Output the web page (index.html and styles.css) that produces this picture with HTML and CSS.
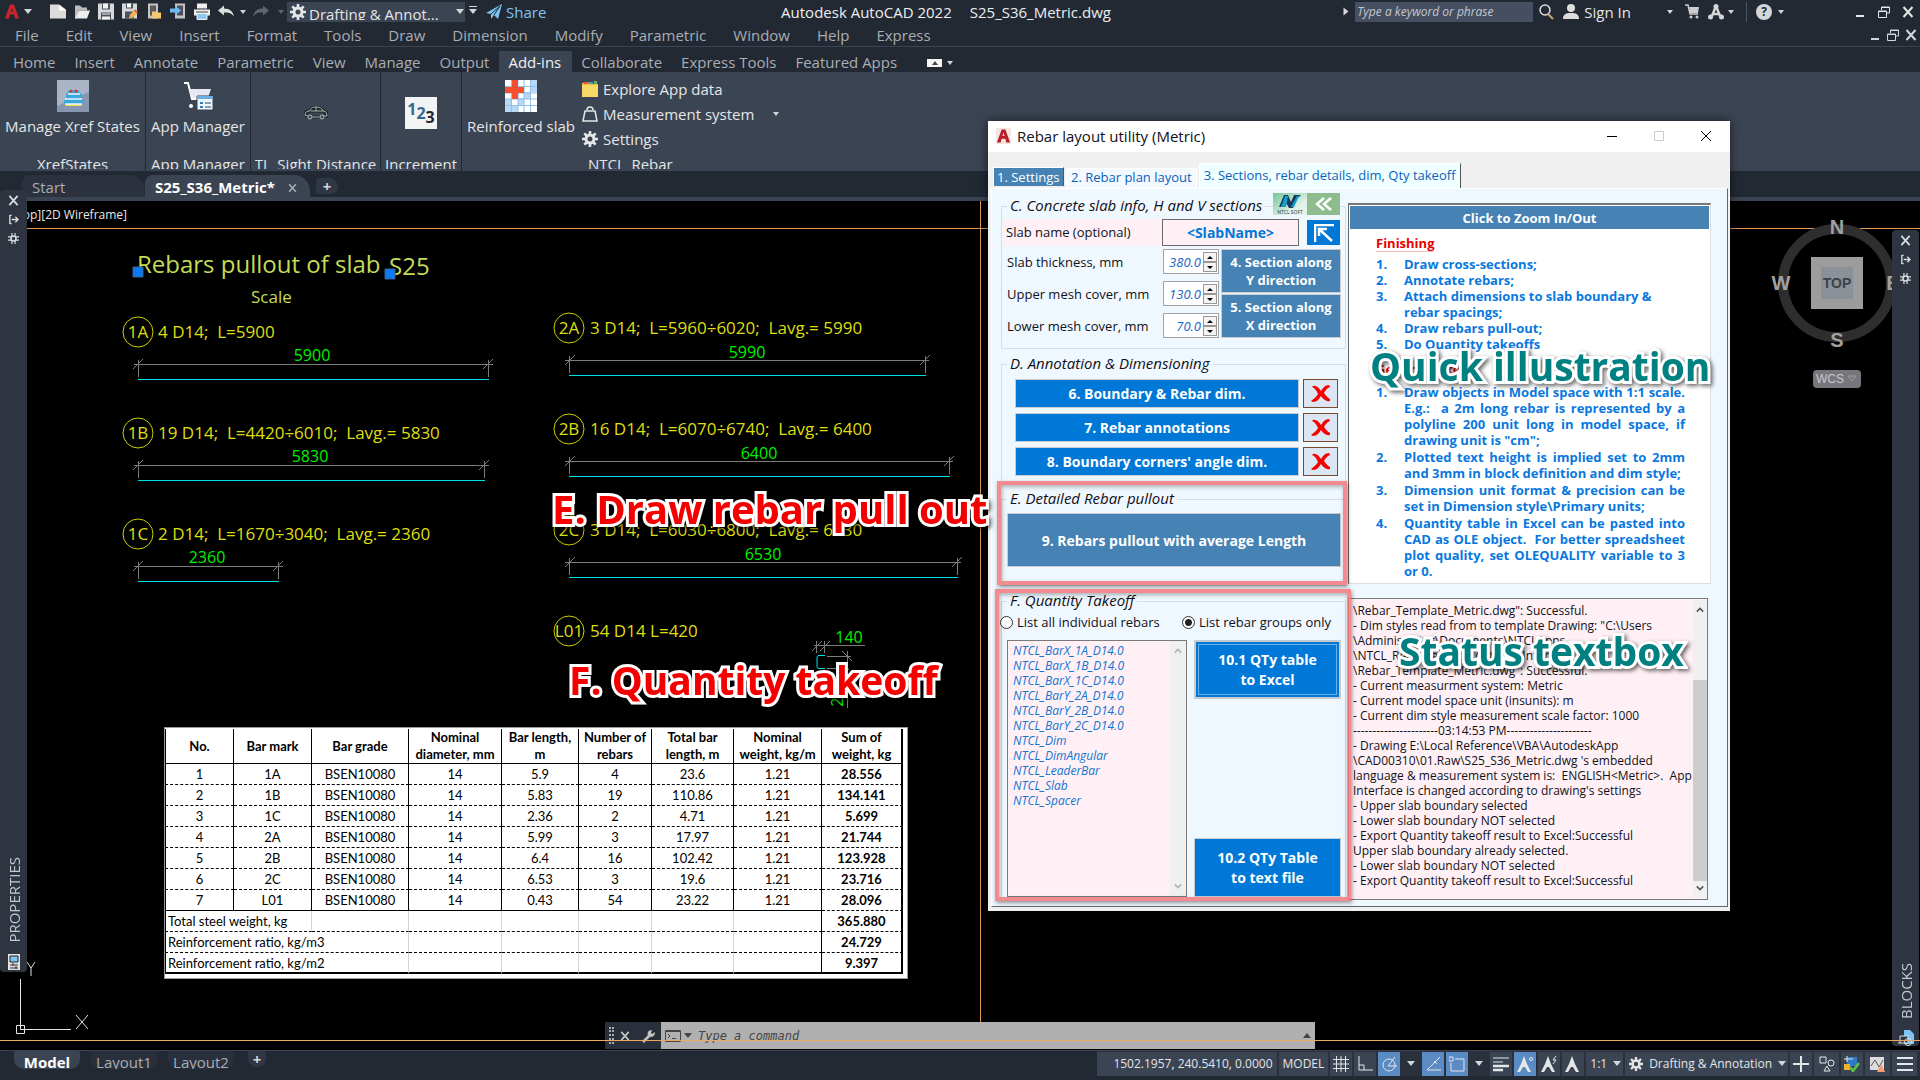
FILE: index.html
```html
<!DOCTYPE html>
<html lang="en">
<head>
    <meta charset="UTF-8">
    <meta name="viewport" content="width=device-width, initial-scale=1.0">
    <title>Autodesk AutoCAD 2022 - S25_S36_Metric.dwg</title>
    <link rel="stylesheet" href="styles.css">
</head>
<body>

    <!-- Shared icons -->
    <svg class="defs" width="0" height="0" aria-hidden="true">
        <symbol id="gear" viewBox="0 0 16 16">
            <circle cx="8" cy="8" r="4" fill="none" stroke="currentColor" stroke-width="3"/>
            <path d="M8 0v3M8 13v3M0 8h3M13 8h3M2.300 2.300l2.200 2.200M11.500 11.500l2.200 2.200M2.300 13.700l2.200-2.200M11.500 4.500l2.200-2.200" stroke="currentColor" stroke-width="2.600"/>
        </symbol>
        <symbol id="close" viewBox="0 0 12 12">
            <path d="M1.500 1l9 10M10.500 1l-9 10" stroke="currentColor" stroke-width="2" fill="none"/>
        </symbol>
        <symbol id="restore" viewBox="0 0 12 12">
            <path d="M3.500 4V1h8v6H9M3 1.500h8" stroke="currentColor" fill="none"/>
            <path d="M.5 5h8v6.500h-8zM.5 5.500h8" stroke="currentColor" fill="none"/>
        </symbol>
        <symbol id="minimize" viewBox="0 0 12 12">
            <path d="M2 10h8" stroke="currentColor" stroke-width="2"/>
        </symbol>
        <symbol id="autohide" viewBox="0 0 12 12">
            <path d="M2 1v10M2 1.500h2M2 10.500h2M4 6h7M8 3l3 3-3 3" stroke="currentColor" stroke-width="1.500" fill="none"/>
        </symbol>
        <symbol id="burst" viewBox="0 0 14 14">
            <circle cx="7" cy="7" r="3.200" fill="none" stroke="currentColor" stroke-width="2"/>
            <path d="M5 0v4M9 0v4M5 10v4M9 10v4M0 5h4M0 9h4M10 5h4M10 9h4" stroke="currentColor" stroke-width="1.500"/>
        </symbol>
        <symbol id="logo" viewBox="0 0 16 16">
            <path d="M1 15L6 1h4l5 14h-4l-1-4H6l-1 4zM7 8h2L8 4z" fill="currentColor" fill-rule="evenodd"/>
        </symbol>
        <symbol id="scale" viewBox="0 0 16 16">
            <path d="M7 0l3 8 4 8h-3l-3-5H6l-3 5H0l4-8z" fill="currentColor"/>
        </symbol>
        <symbol id="redx" viewBox="0 0 20 20">
            <path d="M2 2c3-1 6 2 8 5 2-3 4-6 8-6l1 2c-3 1-5 4-6 6 2 3 4 5 6 6v2c-4 1-7-2-9-5-2 3-4 6-8 6l-2-1c3-2 6-5 7-7C5 6 4 4 1 3z" fill="#f60000"/>
        </symbol>
        <symbol id="up" viewBox="0 0 10 6"><path d="M1 5l4-4 4 4" fill="none" stroke="currentColor" stroke-width="2"/></symbol>
        <symbol id="down" viewBox="0 0 10 6"><path d="M1 1l4 4 4-4" fill="none" stroke="currentColor" stroke-width="2"/></symbol>
    </svg>

    <header class="titlebar">
        <div class="quick">
            <button class="tool app" aria-label="Application menu"><svg width="16" height="18"><use href="#logo"/></svg></button>
            <i class="caret"></i>
            <div class="tools">
                <button class="tool" aria-label="New"><svg viewBox="0 0 16 16"><path d="M0 1h9l7 5v9H0z" fill="#dcdcdc"/><path d="M9 1l7 6H9z" fill="#fff"/></svg></button>
                <button class="tool" aria-label="Open"><svg viewBox="0 0 16 16"><path d="M1 15V2h5l2 2h5v3H5l-3 8z" fill="#bbb"/><path d="M5 7h11l-3 8H1z" fill="#eee"/></svg></button>
                <button class="tool" aria-label="Save"><svg viewBox="0 0 16 16"><path d="M0 0h16v16H0z" fill="#d8d8d8"/><path d="M4 0h8v6H4zM3 9h10v7H3z" fill="#4a5260"/><path d="M5 0h5v5H5zM4 10h8v1H4zM4 13h8v3H4z" fill="#f2f2f2"/></svg></button>
                <button class="tool" aria-label="Save As"><svg viewBox="0 0 16 16"><path d="M0 0h15v15H0z" fill="#d8d8d8"/><path d="M4 0h7v5H4zM3 8h9v7H3z" fill="#4a5260"/><path d="M5 0h4v4H5z" fill="#fff"/><path d="M7 15l1-4 5-5 3 3-5 5z" fill="#f0b45a"/><path d="M13 6l3 3-1 1-3-3z" fill="#e0483c"/></svg></button>
                <button class="tool" aria-label="Open from mobile"><svg viewBox="0 0 16 16"><path d="M2 0h10v15H2z" fill="#c4c4c4"/><path d="M4 2h6v10H4z" fill="#5a5a5a"/><path d="M6 15V8h4l1 1h4v6z" fill="#f7c873"/></svg></button>
                <button class="tool" aria-label="Save to mobile"><svg viewBox="0 0 16 16"><path d="M5 0h10v15H5z" fill="#c4c4c4"/><path d="M7 2h6v10H7z" fill="#4a4f58"/><path d="M0 5h5V2l6 5-6 5V9H0z" fill="#6cbcf0"/></svg></button>
                <button class="tool" aria-label="Plot"><svg viewBox="0 0 16 16"><path d="M3 0h10v5H3zM0 6h16v6H0z" fill="#f0f0f0"/><path d="M2 8h12v1H2z" fill="#444"/><path d="M3 10h10v6H3z" fill="#8ccaf5" stroke="#eee"/></svg></button>
            </div>
            <button class="tool" aria-label="Undo"><svg viewBox="0 0 16 16"><path d="M0 7l6-5v3c6 0 9 3 10 8-3-4-6-4-10-4v3z" fill="#ddd"/></svg></button>
            <i class="caret small"></i>
            <button class="tool redo" aria-label="Redo"><svg viewBox="0 0 16 16"><path d="M16 7l-6-5v3C4 5 1 8 0 13c3-4 6-4 10-4v3z" fill="#5d6571"/></svg></button>
            <i class="caret small dim"></i>
            <button class="workspace"><svg width="16" height="16"><use href="#gear"/></svg><span>Drafting &amp; Annot...</span><i class="caret"></i></button>
            <i class="caret lined"></i>
            <button class="share"><svg width="16" height="16" viewBox="0 0 16 16"><path d="M0 9L16 0l-4 15-4-4-3 4v-5z" fill="#7cc4f4"/><path d="M5 10l9-8-6 9" fill="none" stroke="#222933"/></svg>Share</button>
        </div>
        <h1 class="title"><span>Autodesk AutoCAD 2022</span><span>S25_S36_Metric.dwg</span></h1>
        <div class="account">
            <i class="caret side"></i>
            <input class="search" type="text" placeholder="Type a keyword or phrase" aria-label="Search">
            <svg width="15" height="16" viewBox="0 0 15 16"><circle cx="6" cy="6" r="5" fill="none" stroke="#ddd" stroke-width="1.500"/><path d="M9 10l5 5" stroke="#c9a878" stroke-width="2"/></svg>
            <button class="signin"><svg width="16" height="16" viewBox="0 0 16 16"><circle cx="8" cy="4" r="4" fill="#ddd"/><path d="M0 15c0-5 3-6 8-6s8 1 8 6z" fill="#ddd"/></svg>Sign In</button>
            <i class="caret small"></i>
            <svg width="15" height="15" viewBox="0 0 15 15"><path d="M0 1h3l2 9h8" fill="none" stroke="#ccc" stroke-width="1.500"/><path d="M4 3h10l-1 6H5z" fill="#ccc"/><circle cx="6" cy="13" r="1.500" fill="#ccc"/><circle cx="12" cy="13" r="1.500" fill="#ccc"/></svg>
            <svg width="16" height="16" class="light" viewBox="0 0 16 16"><path d="M8 2l4 10M8 2L4 12M4 10h8" fill="none" stroke="#d4d6d9" stroke-width="2.500"/><circle cx="8" cy="2.500" r="2.500" fill="#d4d6d9"/><circle cx="2.500" cy="13" r="2.500" fill="#d4d6d9"/><circle cx="13.500" cy="13" r="2.500" fill="#d4d6d9"/></svg>
            <i class="caret small"></i>
            <span class="sep"></span>
            <button class="help" aria-label="Help">?</button>
            <i class="caret small"></i>
            <div class="winbtns">
                <button class="tool" aria-label="Minimize"><svg><use href="#minimize"/></svg></button>
                <button class="tool" aria-label="Restore"><svg><use href="#restore"/></svg></button>
                <button class="tool" aria-label="Close"><svg><use href="#close"/></svg></button>
            </div>
        </div>
    </header>

    <nav class="menubar">
        <a href="#">File</a><a href="#">Edit</a><a href="#">View</a><a href="#">Insert</a><a href="#">Format</a><a href="#">Tools</a><a href="#">Draw</a><a href="#">Dimension</a><a href="#">Modify</a><a href="#">Parametric</a><a href="#">Window</a><a href="#">Help</a><a href="#">Express</a>
        <div class="winbtns doc">
            <button class="tool" aria-label="Minimize drawing"><svg><use href="#minimize"/></svg></button>
            <button class="tool" aria-label="Restore drawing"><svg><use href="#restore"/></svg></button>
            <button class="tool" aria-label="Close drawing"><svg><use href="#close"/></svg></button>
        </div>
    </nav>

    <nav class="ribbon-tabs">
        <a href="#">Home</a><a href="#">Insert</a><a href="#">Annotate</a><a href="#">Parametric</a><a href="#">View</a><a href="#">Manage</a><a href="#">Output</a><a href="#" class="active">Add-ins</a><a href="#">Collaborate</a><a href="#">Express Tools</a><a href="#">Featured Apps</a>
        <button class="collapse" aria-label="Minimize ribbon"><i class="caret flip"></i></button>
        <i class="caret small"></i>
    </nav>

    <section class="ribbon">
        <div class="panel xref">
            <button class="big">
                <svg width="32" height="32" viewBox="0 0 32 32"><path d="M0 0h32v32H0z" fill="#8797b2"/><path d="M0 0h32v12L0 26z" fill="#a9b4c6"/><path d="M8 26l4-5h8l5 5z" fill="#ecd94e"/><path d="M7 21l4-4h11l4 4v3H7zM9 15l3-5h9l4 5v3H9z" fill="#3aa7dd"/><path d="M11 14h12M8 19h17M8 24h17" stroke="#eaf6ff" stroke-width="1.500"/><circle cx="14" cy="11" r="1.500" fill="#d33"/><circle cx="19" cy="11" r="1.500" fill="#d33"/></svg>
                <span>Manage Xref States</span>
            </button>
            <h2>XrefStates</h2>
        </div>
        <div class="panel apps">
            <button class="big">
                <svg width="32" height="32" viewBox="0 0 32 32"><path d="M2 3h4l4 16h10" fill="none" stroke="#fff" stroke-width="2"/><path d="M7 9h22l-3 9H10z" fill="#e8e8f0"/><circle cx="9" cy="26" r="2" fill="#fff"/><path d="M15 16h16v14H15z" fill="#eef6ff" stroke="#39424f"/><path d="M15 16h16v3H15z" fill="#6aaede"/><path d="M18 22h3v2h-3zM18 26h3v2h-3z" fill="#2b7cc4"/><path d="M23 23h6M23 27h6" stroke="#345"/></svg>
                <span>App Manager</span>
            </button>
            <h2>App Manager</h2>
        </div>
        <div class="panel sight">
            <button class="big solo" aria-label="TL Sight Distance">
                <svg width="24" height="14" viewBox="0 0 24 14"><path d="M1 9c0-3 2-4 5-4 1-3 2-4 6-4s6 1 7 4c3 0 4 2 4 5h-3M1 9l3 1M8 11h7M7 5h12M12 1v4" fill="none" stroke="#1b2026" stroke-width="3"/><path d="M1 9c0-3 2-4 5-4 1-3 2-4 6-4s6 1 7 4c3 0 4 2 4 5h-3M1 9l3 1M8 11h7M7 5h12M12 1v4" fill="none" stroke="#a9bcb4"/><circle cx="6" cy="11" r="2" fill="none" stroke="#a9bcb4"/><circle cx="18" cy="11" r="2" fill="none" stroke="#a9bcb4"/></svg>
            </button>
            <h2>TL_Sight Distance</h2>
        </div>
        <div class="panel incr">
            <button class="big solo" aria-label="Increment"><span class="numbers"><b>1</b><b>2</b><b>3</b></span></button>
            <h2>Increment</h2>
        </div>
        <div class="panel rebar">
            <button class="big">
                <svg width="32" height="32" viewBox="0 0 32 32"><path d="M0 0h32v32H0z" fill="#fff"/><path d="M0 19h7v13H0zM6 25h7v7H6zM13 18h6v7h-6zM19 12h7v7h-7zM25 0h7v12h-7z" fill="#b7d9f5"/><path d="M6.500 0v32M13 0v32M19 0v32M25.500 0v32M0 6.500h32M0 13h32M0 19h32M0 25.500h32" stroke="#8fc0ea"/><path d="M7 0h6v7h6v6h-6v6H7v-6H0V7h7z" fill="#f4502f"/></svg>
                <span>Reinforced slab</span>
            </button>
            <div class="rows">
                <button><svg width="16" height="16" viewBox="0 0 16 16"><path d="M0 2l6-1 2 2h8v13H0z" fill="#f0b93c"/><path d="M0 4h16v12H0z" fill="#f9d965"/><path d="M2 1h4v2H2z" fill="#e8573f"/><path d="M7 1h4v2H7z" fill="#4a98e0"/><path d="M12 0h3v3h-3z" fill="#5cb85c"/></svg>Explore App data</button>
                <button><svg width="16" height="16" viewBox="0 0 16 16"><path d="M3 5h10l2 10H1zM5 4c0-4 6-4 6 0" fill="none" stroke="#e6e6e6" stroke-width="1.500"/></svg>Measurement system<i class="caret small"></i></button>
                <button><svg width="16" height="16"><use href="#gear"/></svg>Settings</button>
                <h2>NTCL_Rebar</h2>
            </div>
        </div>
    </section>

    <nav class="doc-tabs">
        <a href="#" class="start">Start</a>
        <a href="#" class="current">S25_S36_Metric*<svg width="9" height="10"><use href="#close"/></svg></a>
        <button aria-label="New tab">+</button>
    </nav>

    <main class="canvas">
        <svg class="drawing" width="100%" height="100%">
            <path class="frame" d="M0 27.500h4000M980.500 0v839"/>

            <g class="heading">
                <text x="137" y="72" class="t24">Rebars pullout of slab</text>
                <text x="389" y="74" class="t24">S25</text>
                <text x="251" y="102" class="t17">Scale</text>
                <path class="grip" d="M133 66h10v10h-10zM385 68h10v10h-10z"/>
            </g>

            <g class="mark">
                <circle cx="138" cy="131" r="15"/><text x="138" y="137" class="mid">1A</text>
                <circle cx="138" cy="232" r="15"/><text x="138" y="238" class="mid">1B</text>
                <circle cx="138" cy="333" r="15"/><text x="138" y="339" class="mid">1C</text>
                <circle cx="569" cy="127" r="15"/><text x="569" y="133" class="mid">2A</text>
                <circle cx="569" cy="228" r="15"/><text x="569" y="234" class="mid">2B</text>
                <circle cx="569" cy="329" r="15"/><text x="569" y="335" class="mid">2C</text>
                <circle cx="569" cy="430" r="15"/><text x="569" y="436" class="mid">L01</text>
                <text x="158" y="137">4 D14;  L=5900</text>
                <text x="158" y="238">19 D14;  L=4420÷6010;  Lavg.= 5830</text>
                <text x="158" y="339">2 D14;  L=1670÷3040;  Lavg.= 2360</text>
                <text x="590" y="133">3 D14;  L=5960÷6020;  Lavg.= 5990</text>
                <text x="590" y="234">16 D14;  L=6070÷6740;  Lavg.= 6400</text>
                <text x="590" y="335">3 D14;  L=6030÷6800;  Lavg.= 6530</text>
                <text x="590" y="436">54 D14 L=420</text>
            </g>

            <g class="dim-line">
                <path d="M134 163.500h359M138.500 159v17M488.500 159v17M133 168l10-10M483 168l10-10"/>
                <path d="M134 264.500h355M138.500 260v17M484.500 260v17M133 269l10-10M479 269l10-10"/>
                <path d="M134 365.500h149M138.500 361v17M278.500 361v17M133 370l10-10M273 370l10-10"/>
                <path d="M565 159.500h364M569.500 155v17M925.500 155v17M565 164l10-10M920 164l10-10"/>
                <path d="M565 260.500h388M569.500 256v17M949.500 256v17M565 265l10-10M944 265l10-10"/>
                <path d="M565 361.500h396M569.500 357v17M957.500 357v17M565 366l10-10M952 366l10-10"/>
                <path d="M814 444.500h51M816.500 440v12M824.500 440v12M812 450l10-10M820 450l10-10M827 455.500h24M827 467.500h22M847.500 450v57M842 450l10 10M842 462l10 10"/>
            </g>

            <path class="bar" d="M138 178.500h351M138 279.500h347M138 380.500h141M569 174.500h357M569 275.500h381M569 376.500h389M825 454.500h-6q-2 0-2 2v9q0 2 2 2h6"/>

            <g class="dim-text">
                <text x="312" y="160">5900</text>
                <text x="310" y="261">5830</text>
                <text x="207" y="362">2360</text>
                <text x="747" y="157">5990</text>
                <text x="759" y="258">6400</text>
                <text x="763" y="359">6530</text>
                <text x="849" y="442">140</text>
                <text transform="translate(843 492) rotate(-90)">210</text>
            </g>

            <g class="ucs">
                <path d="M20.500 778v50.500H71M16.500 824.500h8v8h-8zM76 814l12 14M88 814l-12 14M27 761l4 6 4-6M31 767v8"/>
            </g>
        </svg>

        <p class="viewlabel">[–][<span>Top][2D Wireframe]</span></p>

        <table class="takeoff">
            <colgroup><col class="c1"><col class="c2"><col class="c3"><col class="c4"><col class="c5"><col class="c6"><col class="c7"><col class="c8"><col class="c9"></colgroup>
            <thead>
                <tr><th>No.</th><th>Bar mark</th><th>Bar grade</th><th>Nominal diameter, mm</th><th>Bar length, m</th><th>Number of rebars</th><th>Total bar length, m</th><th>Nominal weight, kg/m</th><th>Sum of weight, kg</th></tr>
            </thead>
            <tbody>
                <tr><td>1</td><td>1A</td><td>BSEN10080</td><td>14</td><td>5.9</td><td>4</td><td>23.6</td><td>1.21</td><td>28.556</td></tr>
                <tr><td>2</td><td>1B</td><td>BSEN10080</td><td>14</td><td>5.83</td><td>19</td><td>110.86</td><td>1.21</td><td>134.141</td></tr>
                <tr><td>3</td><td>1C</td><td>BSEN10080</td><td>14</td><td>2.36</td><td>2</td><td>4.71</td><td>1.21</td><td>5.699</td></tr>
                <tr><td>4</td><td>2A</td><td>BSEN10080</td><td>14</td><td>5.99</td><td>3</td><td>17.97</td><td>1.21</td><td>21.744</td></tr>
                <tr><td>5</td><td>2B</td><td>BSEN10080</td><td>14</td><td>6.4</td><td>16</td><td>102.42</td><td>1.21</td><td>123.928</td></tr>
                <tr><td>6</td><td>2C</td><td>BSEN10080</td><td>14</td><td>6.53</td><td>3</td><td>19.6</td><td>1.21</td><td>23.716</td></tr>
                <tr><td>7</td><td>L01</td><td>BSEN10080</td><td>14</td><td>0.43</td><td>54</td><td>23.22</td><td>1.21</td><td>28.096</td></tr>
            </tbody>
            <tfoot>
                <tr><th colspan="2">Total steel weight, kg</th><td></td><td></td><td></td><td></td><td></td><td></td><td>365.880</td></tr>
                <tr><th colspan="3">Reinforcement ratio, kg/m3</th><td></td><td></td><td></td><td></td><td></td><td>24.729</td></tr>
                <tr><th colspan="3">Reinforcement ratio, kg/m2</th><td></td><td></td><td></td><td></td><td></td><td>9.397</td></tr>
            </tfoot>
        </table>

        <svg class="viewcube" width="120" height="180" viewBox="0 0 120 180">
            <circle cx="60" cy="72" r="54" fill="none" stroke="#2e2e2e" stroke-width="10"/>
            <path d="M34 46h52v52H34z" fill="#9c9c9c"/>
            <path d="M44 56h32v32H44z" fill="#8b9198"/>
            <text x="60" y="77" class="top">TOP</text>
            <text x="60" y="23">N</text><text x="60" y="136">S</text><text x="4" y="79">W</text><text x="116" y="79">E</text>
            <rect x="36" y="159" width="48" height="18" rx="4" fill="#76767c"/>
            <text x="53" y="172" class="wcs">WCS</text>
            <path d="M71 165h8l-4 5z" fill="none" stroke="#9c9ca4"/>
        </svg>

        <aside class="palette left">
            <button class="tool" aria-label="Close palette"><svg width="11" height="11"><use href="#close"/></svg></button>
            <button class="tool" aria-label="Auto-hide"><svg width="11" height="11"><use href="#autohide"/></svg></button>
            <button class="tool" aria-label="Properties menu"><svg width="11" height="11"><use href="#burst"/></svg></button>
            <span>PROPERTIES</span>
            <svg width="12" height="16" viewBox="0 0 12 16"><path d="M0 0h12v16H0z" fill="#e2e2e2"/><path d="M2 2h8v6H2z" fill="#7cc4f4" stroke="#222"/><path d="M2 11h8M2 14h8M5 9v3M8 12v3" stroke="#333"/></svg>
        </aside>

        <aside class="palette right">
            <button class="tool" aria-label="Close palette"><svg width="11" height="11"><use href="#close"/></svg></button>
            <button class="tool" aria-label="Auto-hide"><svg width="11" height="11"><use href="#autohide"/></svg></button>
            <button class="tool" aria-label="Blocks menu"><svg width="11" height="11"><use href="#burst"/></svg></button>
            <span>BLOCKS</span>
            <svg width="16" height="16" viewBox="0 0 16 16"><path d="M6 0h6l4 4v10H6z" fill="#7cc4f4"/><path d="M2 6h8v7H2zM2 13H0" fill="#2e3440" stroke="#ddd"/><circle cx="10" cy="12" r="3.500" fill="none" stroke="#ddd"/></svg>
        </aside>

        <div class="command">
            <i class="handle"></i>
            <button class="tool" aria-label="Close command line"><svg width="10" height="10"><use href="#close"/></svg></button>
            <button class="tool" aria-label="Customize"><svg width="14" height="14" viewBox="0 0 14 14"><path d="M1 13l6-6" stroke="#c4c4c4" stroke-width="2.500"/><path d="M10 1c-4 0-5 3-4 6l2 1c3 0 5-1 5-5l-3 2-1-1z" fill="#c4c4c4"/></svg></button>
            <label class="prompt">
                <svg width="16" height="12" viewBox="0 0 16 12"><path d="M.5.5h15v11H.5zM0 1.500h16" fill="none" stroke="#444"/><path d="M3 4l2 2-2 2M7 8.500h4" fill="none" stroke="#444"/></svg>
                <i class="caret dark"></i>
                <input type="text" placeholder="Type a command" aria-label="Command">
                <i class="caret dark flip"></i>
            </label>
        </div>

        <section class="dialog" aria-label="Rebar layout utility">
            <header>
                <svg width="15" height="16"><use href="#logo"/></svg>
                <h2>Rebar layout utility (Metric)</h2>
                <button aria-label="Minimize"><svg width="12" height="12" viewBox="0 0 12 12"><path d="M1 6.500h10" stroke="#000"/></svg></button>
                <button aria-label="Maximize" disabled><svg width="12" height="12" viewBox="0 0 12 12"><path d="M1.500 1.500h9v9h-9z" fill="none" stroke="#ccc"/></svg></button>
                <button aria-label="Close"><svg width="12" height="12" viewBox="0 0 12 12"><path d="M1 1l10 10M11 1L1 11" stroke="#000"/></svg></button>
            </header>
            <nav class="tabs">
                <a href="#" class="first">1. Settings</a>
                <a href="#">2. Rebar plan layout</a>
                <a href="#" class="active">3. Sections, rebar details, dim, Qty takeoff</a>
            </nav>
            <div class="page">
                <div class="col">
                    <fieldset class="slab">
                        <legend>C. Concrete slab info, H and V sections</legend>
                        <div class="corner">
                            <svg width="34" height="22" viewBox="0 0 34 22"><defs><linearGradient id="mint" x2="1" y2="1"><stop offset="0" stop-color="#72c596"/><stop offset=".7" stop-color="#e4f3ea"/></linearGradient></defs><path d="M0 0h34v22H0z" fill="url(#mint)"/><path d="M6 14L11 2h4l3 7 3-7h7l-4 4-4 9h-4l-4-7-2 6z" fill="#173a5e"/><path d="M8 14l4-11h3l-2 11zM18 14l6-11h2l-5 11z" fill="#12a0cf"/><text x="17" y="21" text-anchor="middle" font-size="5" fill="#333">NTCL SOFT</text></svg>
                            <button aria-label="Collapse"><svg width="18" height="14" viewBox="0 0 18 14"><path d="M9 1L2 7l7 6M16 1L9 7l7 6" fill="none" stroke="#fff" stroke-width="2.500"/></svg></button>
                        </div>
                        <div class="name-row">
                            <label for="slab-name">Slab name (optional)</label>
                            <input id="slab-name" type="text" value="&lt;SlabName&gt;">
                            <button aria-label="Pick slab"><svg width="20" height="18" viewBox="0 0 20 18"><path d="M1 18V1h19M5 5l13 12M5 12V5h8" fill="none" stroke="#fff" stroke-width="2.500"/></svg></button>
                        </div>
                        <div class="cover">
                            <div class="spins">
                                <label for="thick">Slab thickness, mm</label>
                                <div class="spin"><input id="thick" type="text" value="380.0"><button aria-label="Increase"><i></i></button><button aria-label="Decrease"><i class="dn"></i></button></div>
                                <label for="upper">Upper mesh cover, mm</label>
                                <div class="spin"><input id="upper" type="text" value="130.0"><button aria-label="Increase"><i></i></button><button aria-label="Decrease"><i class="dn"></i></button></div>
                                <label for="lower">Lower mesh cover, mm</label>
                                <div class="spin"><input id="lower" type="text" value="70.0"><button aria-label="Increase"><i></i></button><button aria-label="Decrease"><i class="dn"></i></button></div>
                            </div>
                            <div class="sections">
                                <button class="steel">4. Section along<br>Y direction</button>
                                <button class="steel">5. Section along<br>X direction</button>
                            </div>
                        </div>
                    </fieldset>

                    <fieldset class="annot">
                        <legend>D. Annotation &amp; Dimensioning</legend>
                        <div class="pairs">
                            <button class="blue">6. Boundary &amp; Rebar dim.</button><button class="del" aria-label="Delete dims"><svg width="20" height="20"><use href="#redx"/></svg></button>
                            <button class="blue">7. Rebar annotations</button><button class="del" aria-label="Delete annotations"><svg width="20" height="20"><use href="#redx"/></svg></button>
                            <button class="blue">8. Boundary corners' angle dim.</button><button class="del" aria-label="Delete angle dims"><svg width="20" height="20"><use href="#redx"/></svg></button>
                        </div>
                    </fieldset>

                    <fieldset class="pullout">
                        <legend>E. Detailed Rebar pullout</legend>
                        <button class="steel">9. Rebars pullout with average Length</button>
                    </fieldset>

                    <fieldset class="quantity">
                        <legend>F. Quantity Takeoff</legend>
                        <div class="radios">
                            <label><input type="radio" name="scope">List all individual rebars</label>
                            <label><input type="radio" name="scope" checked>List rebar groups only</label>
                        </div>
                        <div class="export">
                            <div class="listbox">
                                <ul>
                                    <li>NTCL_BarX_1A_D14.0</li>
                                    <li>NTCL_BarX_1B_D14.0</li>
                                    <li>NTCL_BarX_1C_D14.0</li>
                                    <li>NTCL_BarY_2A_D14.0</li>
                                    <li>NTCL_BarY_2B_D14.0</li>
                                    <li>NTCL_BarY_2C_D14.0</li>
                                    <li>NTCL_Dim</li>
                                    <li>NTCL_DimAngular</li>
                                    <li>NTCL_LeaderBar</li>
                                    <li>NTCL_Slab</li>
                                    <li>NTCL_Spacer</li>
                                </ul>
                                <div class="scroll off"><svg width="8" height="6"><use href="#up"/></svg><svg width="8" height="6"><use href="#down"/></svg></div>
                            </div>
                            <div class="export-btns">
                                <button class="blue focus">10.1 QTy table<br>to Excel</button>
                                <button class="blue">10.2 QTy Table<br>to text file</button>
                            </div>
                        </div>
                    </fieldset>
                </div>

                <div class="col info">
                    <article class="guide">
                        <button class="zoom">Click to Zoom In/Out</button>
                        <h3>Finishing</h3>
                        <ol>
                            <li>Draw cross-sections;</li>
                            <li>Annotate rebars;</li>
                            <li>Attach dimensions to slab boundary &amp; rebar spacings;</li>
                            <li>Draw rebars pull-out;</li>
                            <li>Do Quantity takeoffs</li>
                        </ol>
                        <h3>General notes</h3>
                        <ol class="notes">
                            <li>Draw objects in Model space with 1:1 scale. E.g.:&nbsp; a 2m long rebar is represented by a polyline 200 unit long in model space, if drawing unit is "cm";</li>
                            <li>Plotted text height is implied set to 2mm and 3mm in block definition and dim style;</li>
                            <li>Dimension unit format &amp; precision can be set in Dimension style\Primary units;</li>
                            <li>Quantity table in Excel can be pasted into CAD as OLE object.&nbsp; For better spreadsheet plot quality, set OLEQUALITY variable to 3 or 0.</li>
                        </ol>
                    </article>
                    <div class="status">
                        <textarea readonly aria-label="Status">\Rebar_Template_Metric.dwg": Successful.
- Dim styles read from to template Drawing: "C:\Users
\Administrator\Documents\NTCLApps
\NTCL_RebarLayout\Contents\Interface
\Rebar_Template_Metric.dwg": Successful.
- Current measurment system: Metric
- Current model space unit (insunits): m
- Current dim style measurement scale factor: 1000
----------------------03:14:53 PM----------------------
- Drawing E:\Local Reference\VBA\AutodeskApp
\CAD00310\01.Raw\S25_S36_Metric.dwg 's embedded
language &amp; measurement system is:  ENGLISH&lt;Metric&gt;.  App
Interface is changed according to drawing's settings
- Upper slab boundary selected
- Lower slab boundary NOT selected
- Export Quantity takeoff result to Excel:Successful
Upper slab boundary already selected.
- Lower slab boundary NOT selected
- Export Quantity takeoff result to Excel:Successful</textarea>
                        <div class="scroll"><svg width="8" height="6"><use href="#up"/></svg><i></i><svg width="8" height="6"><use href="#down"/></svg></div>
                    </div>
                </div>
            </div>
            <div class="outline step-e"></div>
            <div class="outline step-f"></div>
            <strong class="callout teal guide-tag">Quick illustration</strong>
            <strong class="callout teal status-tag">Status textbox</strong>
        </section>

        <strong class="callout pullout-tag">E. Draw rebar pull out</strong>
        <strong class="callout takeoff-tag">F. Quantity takeoff</strong>
    </main>

    <footer class="statusbar">
        <nav class="layouts">
            <a href="#" class="active">Model</a>
            <a href="#">Layout1</a>
            <a href="#">Layout2</a>
            <button aria-label="New layout">+</button>
        </nav>
        <div class="toggles">
            <span class="coords">1502.1957, 240.5410, 0.0000</span>
            <button>MODEL</button>
            <button class="ico" aria-label="Grid"><svg viewBox="0 0 16 16"><path d="M3.500 0v16M8 0v16M12.500 0v16M0 3.500h16M0 8h16M0 12.500h16"/></svg></button>
            <button class="ico" aria-label="Ortho"><svg viewBox="0 0 16 16"><path d="M2 0v14h14M2 9h5v5"/></svg></button>
            <button class="ico on" aria-label="Polar"><svg viewBox="0 0 16 16"><circle cx="8" cy="9" r="6"/><path d="M7 10l7-9M7 10h9"/></svg></button>
            <i class="caret"></i>
            <button class="ico on" aria-label="Object snap tracking"><svg viewBox="0 0 16 16"><path d="M15 1L2 14h14M9 5l3 3"/></svg></button>
            <button class="ico on" aria-label="Object snap"><svg viewBox="0 0 16 16"><path d="M6 3h9v12H2V7M0 1h4v4H0z"/></svg></button>
            <i class="caret"></i>
            <button class="ico" aria-label="Lineweight"><svg viewBox="0 0 16 16"><path d="M0 2h16M0 6h10" /><path d="M0 10h16M0 14h10" stroke-width="2.500"/></svg></button>
            <button class="ico on" aria-label="Annotation visibility"><svg viewBox="0 0 16 16"><use href="#scale" width="16" height="16"/><circle cx="14" cy="3" r="1.500"/></svg></button>
            <button class="ico" aria-label="Auto scale"><svg viewBox="0 0 16 16"><use href="#scale" width="16" height="16"/><path d="M15 0l-3 4h3l-3 4"/></svg></button>
            <button class="ico" aria-label="Annotation scale"><svg viewBox="0 0 16 16"><use href="#scale" width="16" height="16"/></svg></button>
            <button class="ratio">1:1<i class="caret"></i></button>
            <button class="space"><svg width="14" height="14"><use href="#gear"/></svg>Drafting &amp; Annotation<i class="caret"></i></button>
            <button class="ico" aria-label="Annotation monitor"><svg viewBox="0 0 16 16"><path d="M8 0v16M0 8h16" stroke-width="2"/></svg></button>
            <button class="ico wide" aria-label="Isolate objects"><svg viewBox="0 0 16 16"><path d="M1 1h6v6H1zM5 15l3-5 3 5z"/><circle cx="12" cy="7" r="3"/></svg></button>
            <button class="ico" aria-label="Hardware acceleration"><svg viewBox="0 0 16 16"><path d="M3 1h10v9H3z" fill="#2b7cc4" stroke="none"/><path d="M0 8h6v6H0z" fill="#f0b030" stroke="none"/><path d="M0 3h9M3 0v6"/><path d="M6 11l3 4 6-8" stroke="#5cc040" stroke-width="2.500"/></svg></button>
            <button class="ico wide" aria-label="Performance"><svg viewBox="0 0 16 16"><path d="M0 1h14v13H0z" fill="#dcdcdc" stroke="none"/><path d="M1 10l4-6 4 7 4-7" stroke="#555"/><path d="M11 8l4 8H7z" fill="#f0a070" stroke="none"/></svg></button>
            <button class="ico wide" aria-label="Customization"><svg viewBox="0 0 16 16"><path d="M0 2h16M0 8h16M0 14h16" stroke-width="2"/></svg></button>
        </div>
    </footer>

</body>
</html>
```

FILE: styles.css
```css
* {
    box-sizing: border-box;
}
body {
    margin: 0;
    height: 100vh;
    display: flex;
    flex-direction: column;
    overflow: hidden;
    background: #222933;
    color: #d4d6d9;
    font-family: "Open Sans", "Noto Sans", sans-serif;
    font-size: 15px;
}
button, input, textarea {
    font: inherit;
    color: inherit;
    border: 0;
    padding: 0;
    margin: 0;
    background: none;
}
a {
    color: inherit;
    text-decoration: none;
}
h1, h2, h3, p, ol, ul {
    margin: 0;
    padding: 0;
    font-size: inherit;
}
h1, h2 {
    font-weight: normal;
}
svg {
    flex: none;
}
.defs {
    position: absolute;
}
.tool {
    display: flex;
    align-items: center;
    justify-content: center;
}
.tool svg {
    display: block;
}
.caret {
    flex: none;
    width: 0;
    height: 0;
    border: 4px solid transparent;
    border-top: 5px solid #d4d6d9;
    border-bottom: 0;
}
.caret.small {
    border-width: 4px 3px 0;
}
.caret.dim {
    border-top-color: #5d6571;
}
.caret.dark {
    border-top-color: #444;
}
.caret.flip {
    transform: rotate(180deg);
}
.caret.side {
    transform: rotate(-90deg);
}

/* title bar */
.titlebar {
    height: 23px;
    display: grid;
    grid-template-columns: 1fr auto 1fr;
    align-items: center;
    color: #e4e6e8;
}
.quick, .account, .tools, .winbtns {
    display: flex;
    align-items: center;
}
.quick {
    padding-left: 4px;
}
.app {
    color: #c9252c;
    margin-right: 4px;
}
.tools {
    margin-left: 14px;
}
.tools .tool {
    width: 24px;
}
.quick .tool svg {
    width: 16px;
    height: 17px;
}
.quick > .tool:not(.app) {
    margin: 0 6px 0 4px;
}
.quick > .tool.redo {
    margin: 0 9px 0 7px;
}
.workspace {
    display: flex;
    align-items: center;
    width: 178px;
    height: 20px;
    margin-left: 3px;
    padding: 0 1px 0 3px;
    background: #3b4453;
}
.workspace span {
    flex: 1;
    height: 17px;
    line-height: 22px;
    margin-left: 3px;
    overflow: hidden;
    text-align: left;
}
.caret.lined {
    margin: 0 9px 0 4px;
    position: relative;
}
.caret.lined::before {
    content: "";
    position: absolute;
    left: -4px;
    top: -8px;
    width: 8px;
    height: 1px;
    background: #d4d6d9;
}
.share {
    display: flex;
    align-items: center;
    gap: 4px;
    color: #7cc4f4;
}
.title {
    display: flex;
    gap: 18px;
    margin-right: 28px;
    color: #eceef0;
}
.account {
    justify-content: flex-end;
    padding-right: 6px;
}
.search {
    width: 178px;
    height: 20px;
    margin: 0 6px 0 5px;
    padding: 0 2px;
    background: #454f61;
    font-size: 12px;
    font-style: italic;
}
.search::placeholder {
    color: #c4c8ce;
}
.signin {
    display: flex;
    align-items: center;
    gap: 5px;
    margin: 0 36px 0 9px;
}
.account > svg + svg {
    margin: 0 4px 0 8px;
}
.account .caret + svg:not(.light) {
    margin-left: 12px;
}
.sep {
    width: 1px;
    height: 20px;
    margin: 0 9px 0 12px;
    background: #4b5462;
}
.help {
    width: 16px;
    height: 16px;
    margin-right: 6px;
    border-radius: 8px;
    background: #d4d6d9;
    color: #222933;
    font-size: 12px;
    font-weight: bold;
    line-height: 16px;
}
.winbtns {
    gap: 12px;
    margin-left: 70px;
}
.winbtns svg {
    width: 12px;
    height: 12px;
}

/* menu bar and ribbon */
.menubar {
    height: 24px;
    display: flex;
    align-items: center;
    gap: 27px;
    padding: 0 3px 0 15px;
    border-bottom: 1px solid #3b4453;
    color: #a9adb4;
}
.winbtns.doc {
    gap: 6px;
    margin-left: auto;
    color: #d4d6d9;
}
.ribbon-tabs {
    height: 25px;
    display: flex;
    align-items: flex-end;
    padding-left: 4px;
    color: #a9adb4;
}
.ribbon-tabs a {
    height: 21px;
    line-height: 22px;
    padding: 0 10px 0 9px;
}
.ribbon-tabs .active {
    padding-right: 11px;
    background: #3b4453;
    color: #f0f1f2;
}
.collapse {
    display: flex;
    align-items: center;
    justify-content: center;
    width: 15px;
    height: 8px;
    margin: 0 5px 5px 20px;
    background: #f4f4f4;
}
.collapse .caret {
    border-width: 4px 3px 0;
    border-top-color: #444;
}
.ribbon-tabs > .caret {
    margin-bottom: 7px;
}
.ribbon {
    height: 99px;
    display: flex;
    background: #3b4453;
    color: #e4e6e8;
}
.panel {
    position: relative;
    flex: none;
    display: flex;
    flex-direction: column;
    align-items: center;
    justify-content: space-between;
    border-right: 1px solid #222933;
    white-space: nowrap;
}
.panel.xref {
    width: 146px;
}
.panel.apps {
    width: 105px;
}
.panel.sight {
    width: 130px;
}
.panel.incr {
    width: 81px;
}
.panel.rebar {
    flex-direction: row;
    align-items: flex-start;
    justify-content: flex-start;
    gap: 7px;
    padding-left: 5px;
    border: 0;
}
.ribbon h2 {
    height: 16px;
    margin-bottom: 2px;
    line-height: 22px;
    overflow: hidden;
}
.big {
    display: flex;
    flex-direction: column;
    align-items: center;
    gap: 4px;
    padding-top: 8px;
}
.big span {
    line-height: 20px;
}
.big.solo {
    flex: 1;
    justify-content: center;
    padding-top: 0;
}
.big .numbers {
    display: flex;
    justify-content: center;
    width: 32px;
    height: 32px;
    padding-top: 2px;
    background: #f2f3f4;
    color: #33688c;
    font-size: 16px;
}
.numbers b:nth-child(2) {
    padding-top: 4px;
}
.numbers b:nth-child(3) {
    padding-top: 8px;
    color: #1c2733;
}
.rows {
    display: flex;
    flex-direction: column;
    padding-top: 5px;
    height: 99px;
}
.rows button {
    display: flex;
    align-items: center;
    gap: 5px;
    height: 25px;
}
.rows .caret {
    margin-left: 14px;
}
.rows h2 {
    margin-left: 6px;
    margin-top: 2px;
}

/* drawing tabs */
.doc-tabs {
    height: 30px;
    display: flex;
    align-items: flex-end;
    padding-left: 22px;
    border-bottom: 4px solid #3b4453;
}
.doc-tabs a {
    height: 22px;
    line-height: 24px;
    padding: 0 10px;
    border-radius: 8px 16px 0 0;
    background: #2b323e;
    color: #a9adb4;
}
.doc-tabs .start {
    width: 123px;
}
.doc-tabs .current {
    width: 165px;
    background: #3b4453;
    color: #fff;
    font-weight: bold;
    white-space: nowrap;
}
.doc-tabs .current svg {
    margin-left: 13px;
    color: #a9adb4;
}
.doc-tabs button {
    width: 22px;
    height: 16px;
    margin: 0 0 3px 6px;
    border-radius: 4px 10px 8px 4px;
    background: #2f3744;
    font-weight: bold;
    line-height: 16px;
}

/* model space */
.canvas {
    position: relative;
    flex: 1;
    background: #000;
}
.drawing {
    position: absolute;
    inset: 0;
}
.drawing path {
    fill: none;
}
.drawing text {
    white-space: pre;
}
.drawing .frame {
    stroke: #e09a55;
}
.heading text {
    fill: #c3dd55;
}
.t24 {
    font-size: 24px;
}
.t17 {
    font-size: 17px;
}
.drawing .grip {
    fill: #0a7cf5;
    stroke: #3f6088;
}
.mark circle {
    fill: none;
    stroke: #cdcd00;
}
.mark text {
    fill: #dede10;
    font-size: 17px;
}
.mark .mid {
    text-anchor: middle;
}
.dim-line path {
    stroke: #7c7c7c;
}
.drawing .bar {
    stroke: #00e0e8;
}
.dim-text text {
    fill: #00f000;
    font-size: 16px;
    text-anchor: middle;
}
.ucs path {
    stroke: #e4e4e4;
}
.canvas::after {
    content: "";
    position: absolute;
    left: 0;
    right: 0;
    bottom: 9px;
    height: 1px;
    background: #eda864;
}
.viewlabel {
    position: absolute;
    right: calc(100% - 127px);
    top: 5px;
    font-size: 12px;
    white-space: nowrap;
    color: #e8e8e8;
}

/* quantity table */
.takeoff {
    position: absolute;
    left: 164px;
    top: 526px;
    width: 744px;
    padding: 1px 4px 4px 0;
    table-layout: fixed;
    border-collapse: separate;
    border-spacing: 0;
    border: 1px solid #999;
    background: #fff;
    color: #000;
    font-family: Lato, sans-serif;
    font-size: 13px;
    line-height: 18px;
    text-align: center;
}
.c1 { width: 69px; }
.c2 { width: 78px; }
.c3 { width: 97px; }
.c4 { width: 93px; }
.c5 { width: 77px; }
.c6 { width: 73px; }
.c7 { width: 82px; }
.c8 { width: 88px; }
.c9 { width: 81px; }
.takeoff td, .takeoff th {
    height: 21px;
    padding: 0;
    border-right: 1px solid #000;
    border-bottom: 1px dashed #000;
}
.takeoff thead th {
    height: 35px;
    line-height: 17px;
    border-bottom: 1px solid #000;
}
.takeoff tr > :last-child {
    font-weight: bold;
    border-right: 2px solid #000;
}
.takeoff tr > :first-child {
    border-left: 1px solid #000;
}
.takeoff tbody tr:last-child td:not(:last-child) {
    border-bottom: 1px solid #000;
}
.takeoff tfoot td:not(:last-child), .takeoff tfoot th {
    border-right-color: #cfd3dc;
}
.takeoff tfoot td:nth-last-child(2) {
    border-right-color: #000 !important;
}
.takeoff tfoot th {
    padding-left: 2px;
    text-align: left;
    font-weight: normal;
}
.takeoff tfoot tr:last-child > * {
    border-bottom: 2px solid #000;
}

/* view cube and palettes */
.viewcube {
    position: absolute;
    right: 23px;
    top: 10px;
    overflow: visible;
}
.viewcube text {
    fill: #a0a0a0;
    font: bold 20px "Liberation Sans", sans-serif;
    text-anchor: middle;
}
.viewcube .top {
    fill: #3c4148;
    font-size: 14px;
}
.viewcube .wcs {
    fill: #c8c8cc;
    font-size: 12px;
    font-weight: normal;
}
.palette {
    position: absolute;
    display: flex;
    flex-direction: column;
    align-items: center;
    width: 27px;
    padding-top: 1px;
    border-radius: 4px;
    background: #2e3440;
    color: #d8dade;
}
.palette.left {
    left: 0;
    top: -11px;
    bottom: 78px;
    padding-bottom: 2px;
}
.palette.right {
    right: 1px;
    top: 29px;
    bottom: 4px;
}
.palette .tool {
    height: 19px;
}
.palette span {
    margin-top: auto;
    margin-bottom: 11px;
    writing-mode: vertical-rl;
    transform: rotate(180deg);
    font-size: 15px;
    color: #c4c8ce;
}

/* command line */
.command {
    position: absolute;
    left: 605px;
    bottom: 1px;
    width: 37%;
    height: 27px;
    display: flex;
    align-items: center;
    gap: 6px;
    padding-left: 4px;
    background: #2a303b;
    color: #c4c4c4;
}
.handle {
    width: 5px;
    height: 17px;
    border-left: 2px dotted #aaa;
    border-right: 2px dotted #aaa;
}
.command .tool:nth-of-type(2) {
    margin: 0 -1px 0 6px;
}
.prompt {
    flex: 1;
    display: flex;
    align-items: center;
    align-self: stretch;
    gap: 3px;
    padding: 0 4px;
    background: #b0b0b0;
}
.prompt input {
    flex: 1;
    margin-left: 3px;
    font: italic 12px "DejaVu Sans Mono", monospace;
}
.prompt input::placeholder {
    color: #444;
}

/* rebar dialog */
.dialog {
    position: absolute;
    left: 988px;
    top: -80px;
    width: 742px;
    padding-bottom: 4px;
    background: #f0f0f0;
    color: #101018;
    font-size: 13px;
    box-shadow: 0 0 10px rgba(0, 0, 0, 0.6);
}
.dialog header {
    display: flex;
    align-items: center;
    height: 31px;
    padding: 0 1px 2px 8px;
    background: #fff;
}
.dialog header > svg {
    color: #b5202a;
    background: #f6e4e0;
}
.dialog header h2 {
    flex: 1;
    margin-left: 6px;
    font-size: 15px;
}
.dialog header button {
    width: 47px;
    height: 29px;
    line-height: 0;
}
.tabs {
    display: flex;
    align-items: flex-end;
    height: 36px;
    padding-left: 5px;
    gap: 2px;
    color: #0a5fc0;
    white-space: nowrap;
}
.tabs a {
    height: 20px;
    line-height: 17px;
    padding: 0 4px;
    background: #f4f9ff;
    border: 1px solid #fff;
    border-bottom: 0;
}
.tabs .first {
    width: 71px;
    height: 19px;
    margin-bottom: 2px;
    padding: 0 3px;
    line-height: 19px;
    background: #4682b4;
    border-right: 1px solid #555;
    color: #fff;
}
.tabs .active {
    height: 25px;
    line-height: 22px;
    background: #f0ffff;
    border-right: 1px solid #555;
}
.page {
    display: flex;
    gap: 2px;
    margin: 0 2px 0 3px;
    padding: 6px 17px 5px 9px;
    border: 1px solid #fff;
    border-right: 1px solid #666;
    border-bottom: 1px solid #666;
    background: #f0f8ff;
}
.col {
    flex: none;
    width: 345px;
    display: flex;
    flex-direction: column;
}
.col.info {
    flex: 1;
    padding-top: 8px;
}
fieldset {
    min-width: 0;
    margin: 0 0 4px;
    border: 1px solid #d8dde2;
    position: relative;
}
legend {
    height: 22px;
    line-height: 20px;
    padding: 0 3px;
    font-size: 15px;
    font-style: italic;
}
.slab {
    padding: 2px 5px 10px 1px;
}
.slab legend {
    margin-left: 4px;
}
.annot legend {
    margin-left: -8px;
}
.corner {
    position: absolute;
    right: 5px;
    top: -24px;
    display: flex;
}
.corner button {
    width: 33px;
    height: 22px;
    background: #8fbc8f;
    line-height: 0;
}
.name-row {
    display: flex;
    align-items: center;
    height: 27px;
    margin-bottom: 3px;
}
.name-row label {
    flex: 1;
    line-height: 27px;
    padding-left: 3px;
    background: #fff0f5;
}
.name-row input {
    width: 137px;
    height: 27px;
    border: 1px solid #6c6c6c;
    background: #fff0f5;
    color: #0078d7;
    font-size: 14px;
    font-weight: bold;
    text-align: center;
}
.name-row button {
    width: 33px;
    height: 25px;
    margin-left: 8px;
    background: #0078d7;
    line-height: 0;
}
.cover {
    display: flex;
    gap: 2px;
    margin-right: -1px;
}
.spins {
    flex: 1;
    display: grid;
    grid-template-columns: 1fr 56px;
    grid-auto-rows: 25px;
    row-gap: 7px;
    align-items: center;
    padding-left: 4px;
}
.spin {
    display: grid;
    grid-template-columns: 1fr 14px;
    grid-template-rows: 10px 10px;
    height: 25px;
    padding: 2px 1px 1px 2px;
    border: 1px solid #a0a4aa;
    background: #fff;
}
.spin input {
    grid-row: 1 / 3;
    min-width: 0;
    padding-right: 2px;
    color: #1464c8;
    font-size: 13px;
    font-style: italic;
    text-align: right;
}
.spin button {
    display: flex;
    align-items: center;
    justify-content: center;
    border: 1px solid #999;
    background: #f4f4f4;
}
.spin i {
    border: 3px solid transparent;
    border-top: 0;
    border-bottom: 3px solid #000;
}
.spin .dn {
    transform: rotate(180deg);
}
.sections {
    width: 120px;
    display: flex;
    flex-direction: column;
    gap: 1px;
}
.steel, .blue {
    border: 1px solid #c8ccd0;
    background: #4682b4;
    color: #fff;
    font-size: 14px;
    font-weight: bold;
}
.blue {
    background: #0078d7;
}
.sections .steel {
    height: 44px;
    line-height: 18px;
    font-size: 13px;
}
.annot {
    padding: 4px 7px 7px 13px;
}
.pairs {
    display: grid;
    grid-template-columns: 1fr 35px;
    grid-auto-rows: 29px;
    gap: 5px 4px;
}
.del {
    border: 1px solid #7a4a2c;
    background: #dbe6f2;
    line-height: 0;
}
.pullout {
    padding: 3px 4px 18px 5px;
}
.pullout .steel {
    display: block;
    width: 100%;
    height: 54px;
}
.quantity {
    margin-bottom: 0;
    padding: 0 4px 3px 5px;
}
.radios {
    display: flex;
    justify-content: space-between;
    height: 20px;
    margin: 0 10px 8px -7px;
    line-height: 20px;
}
.radios label {
    display: flex;
    align-items: center;
    gap: 4px;
}
.radios input {
    appearance: none;
    width: 13px;
    height: 13px;
    border: 1px solid #333;
    border-radius: 50%;
    background: #fff;
}
.radios input:checked {
    background: radial-gradient(circle, #222 3px, #fff 4px);
}
.export {
    display: flex;
    gap: 7px;
}
.listbox {
    display: flex;
    width: 180px;
    height: 257px;
    border: 1px solid #7a7a7a;
    background: #fff0f5;
    color: #1474d0;
}
.listbox ul {
    flex: 1;
    padding: 2px 5px;
    list-style: none;
    font-size: 12px;
    font-style: italic;
    line-height: 15px;
}
.scroll {
    display: flex;
    flex-direction: column;
    justify-content: space-between;
    align-items: center;
    width: 14px;
    padding: 7px 0;
    background: #f0f0f0;
    color: #555;
}
.scroll.off {
    width: 16px;
    color: #b4b4b4;
}
.scroll i {
    width: 14px;
    height: 201px;
    margin: auto 0 4px;
    background: #cdcdcd;
}
.export-btns {
    flex: 1;
    display: flex;
    flex-direction: column;
    justify-content: space-between;
}
.export-btns .blue {
    height: 59px;
    line-height: 20px;
}
.blue.focus {
    outline: 1px solid #6ab0ea;
    outline-offset: -5px;
    border-width: 2px;
}

/* right column */
.guide {
    height: 381px;
    margin-right: -1px;
    padding: 1px 1px 0;
    border: 1px solid #ddd;
    border-left-color: #666;
    border-top: 2px solid #777;
    background: #fff;
    color: #0878e0;
    font-weight: bold;
    font-size: 13px;
    line-height: 16px;
}
.zoom {
    display: block;
    width: 100%;
    height: 23px;
    background: #4682b4;
    color: #fff;
    font-weight: bold;
}
.guide h3 {
    width: fit-content;
    margin: 6px 0 4px 26px;
    color: #e80000;
    border-bottom: 1px solid #f4b8b8;
}
.guide ol {
    margin: 0 24px 0 26px;
    list-style: none;
    counter-reset: step;
}
.guide ol + h3 {
    margin-top: 9px;
    margin-bottom: 6px;
}
.guide li {
    position: relative;
    padding-left: 28px;
    counter-increment: step;
}
.guide li::before {
    content: counter(step) ".";
    position: absolute;
    left: 0;
}
.notes li {
    margin-bottom: 1px;
    text-align: justify;
}
.status {
    display: flex;
    height: 302px;
    margin: 14px 2px 0 0;
    padding: 1px 0;
    border: 1px solid #7a7a7a;
    background: #fff0f5;
}
.status textarea {
    flex: 1;
    min-width: 0;
    padding: 3px 0 0 4px;
    resize: none;
    overflow: hidden;
    outline: 0;
    font-size: 12px;
    line-height: 15px;
    white-space: pre;
}

/* step outlines and callouts */
.outline {
    position: absolute;
    border: 4px solid rgba(244, 120, 125, 0.85);
    box-shadow: 1px 2px 4px rgba(0, 0, 0, 0.4), inset 1px 2px 4px rgba(0, 0, 0, 0.3);
    pointer-events: none;
}
.step-e {
    left: 9px;
    top: 360px;
    width: 350px;
    height: 104px;
}
.step-f {
    left: 7px;
    top: 468px;
    width: 356px;
    height: 312px;
}
.callout {
    position: absolute;
    color: #f40000;
    font-size: 39px;
    line-height: 48px;
    white-space: nowrap;
    -webkit-text-stroke: 6px #fff;
    paint-order: stroke fill;
    filter: drop-shadow(2px 2px 2px rgba(0, 0, 0, 0.6));
}
.callout.teal {
    color: #008080;
}
.pullout-tag {
    left: 552px;
    top: 284px;
    font-size: 40px;
}
.takeoff-tag {
    left: 569px;
    top: 455px;
}
.guide-tag {
    left: 382px;
    top: 221px;
}
.status-tag {
    left: 411px;
    top: 506px;
}

/* status bar */
.statusbar {
    height: 30px;
    display: flex;
    justify-content: space-between;
    border-top: 1px solid #3b4453;
}
.layouts {
    display: flex;
    gap: 11px;
    padding-left: 14px;
}
.layouts a {
    width: 66px;
    height: 18px;
    line-height: 22px;
    overflow: hidden;
    text-align: center;
    border-radius: 2px 2px 10px 10px;
    background: #29303b;
    color: #a9adb4;
}
.layouts .active {
    background: #3b4453;
    color: #fff;
    font-weight: bold;
}
.layouts button {
    width: 18px;
    height: 16px;
    margin-left: 3px;
    line-height: 14px;
    border-radius: 2px 2px 8px 8px;
    background: #2f3744;
    font-weight: bold;
}
.toggles {
    display: flex;
    align-items: center;
    gap: 2px;
    height: 25px;
    padding-right: 3px;
    font-size: 12px;
    color: #e4e6e8;
    background: #2a313d;
}
.toggles > * {
    white-space: nowrap;
}
.toggles button, .coords {
    height: 24px;
    line-height: 24px;
    background: #3b4453;
    padding: 0 4px;
}
.coords {
    width: 180px;
    text-align: right;
}
.toggles .ico {
    display: flex;
    align-items: center;
    justify-content: center;
    width: 22px;
    padding: 0;
}
.toggles .wide {
    width: 25px;
}
.ico svg {
    width: 16px;
    height: 16px;
    fill: none;
    stroke: #e4e6e8;
}
.ico use {
    stroke: none;
}
.toggles .on {
    background: #5a8bc4;
}
.toggles > .caret {
    margin: 0 5px;
}
.toggles .ratio, .toggles .space {
    display: flex;
    align-items: center;
    gap: 6px;
    padding: 0 2px 0 4px;
}
```
